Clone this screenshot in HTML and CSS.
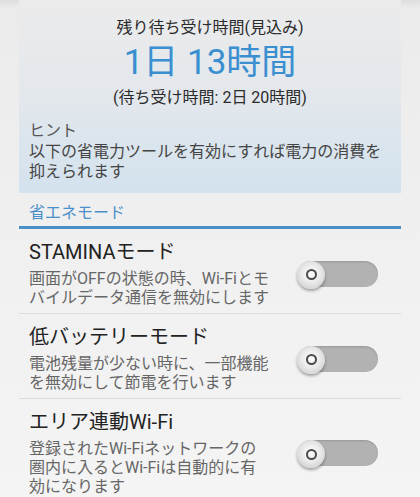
FILE: index.html
```html
<!DOCTYPE html>
<html lang="ja">
  <head>
    <meta charset="UTF-8" />
    <meta name="viewport" content="width=device-width, initial-scale=1.0" />
    <title>STAMINAモード</title>
    <link rel="stylesheet" href="styles.css">
  </head>
  <body>
    <div class="summary">
      <div class="summary-label">残り待ち受け時間(見込み)</div>
      <div class="summary-time">1日 13時間</div>
      <div class="summary-sub">(待ち受け時間: 2日 20時間)</div>
      <div class="hint-title">ヒント</div>
      <div class="hint-text">以下の省電力ツールを有効にすれば電力の消費を<br />抑えられます</div>
    </div>
    <div class="section-title">省エネモード</div>
    <div class="setting">
      <div class="setting-text">
        <div class="setting-name">STAMINAモード</div>
        <div class="setting-desc">画面がOFFの状態の時、Wi-Fiとモ<br />バイルデータ通信を無効にします</div>
      </div>
      <div class="switch"><span class="knob"><span class="ring"></span></span></div>
    </div>
    <div class="setting">
      <div class="setting-text">
        <div class="setting-name">低バッテリーモード</div>
        <div class="setting-desc">電池残量が少ない時に、一部機能<br />を無効にして節電を行います</div>
      </div>
      <div class="switch"><span class="knob"><span class="ring"></span></span></div>
    </div>
    <div class="setting">
      <div class="setting-text">
        <div class="setting-name">エリア連動Wi-Fi</div>
        <div class="setting-desc">登録されたWi-Fiネットワークの<br />圏内に入るとWi-Fiは自動的に有<br />効になります</div>
      </div>
      <div class="switch"><span class="knob"><span class="ring"></span></span></div>
    </div>
  </body>
</html>
```

FILE: styles.css
```css
body {
  margin: 0;
  font-family: Roboto, "Noto Sans CJK JP", sans-serif;
  background: linear-gradient(#dedede 0, #ebebeb 8px, #f1f1f1 300px, #f4f4f4);
  min-height: 497px;
}
.summary {
  margin: 0 19px;
  padding: 17px 10px 11px;
  background: linear-gradient(#ebebeb, #e4e8ec 45%, #d3e2ee);
}
.summary-label {
  text-align: center;
  font-size: 16px;
  line-height: 22px;
  color: #2b2b2b;
}
.summary-time {
  text-align: center;
  font-size: 35px;
  line-height: 44px;
  margin-top: 2px;
  color: #3a8fd1;
}
.summary-sub {
  text-align: center;
  margin-top: 3px;
  font-size: 16px;
  line-height: 20px;
  color: #2b2b2b;
}
.hint-title {
  margin-top: 12px;
  font-size: 16px;
  line-height: 21px;
  color: #555;
}
.hint-text {
  margin-top: 1px;
  font-size: 16px;
  line-height: 20px;
  color: #444;
}
.section-title {
  margin: 0 19px;
  padding: 10px 10px 3px;
  font-size: 16px;
  line-height: 20px;
  color: #4a8fc9;
  border-bottom: 3px solid #4a90c8;
}
.setting {
  display: flex;
  align-items: center;
  margin: 0 19px;
  padding: 11px 23px 6px 10px;
  border-bottom: 1px solid #dddddd;
}
.setting:last-child {
  border-bottom: none;
}
.setting-text {
  flex: 1;
}
.setting-name {
  font-size: 20px;
  line-height: 24px;
  color: #222;
}
.setting-desc {
  margin-top: 5px;
  font-size: 16px;
  line-height: 19px;
  color: #666;
  white-space: nowrap;
}
.switch {
  display: flex;
  align-items: center;
  width: 80px;
  height: 26px;
  border-radius: 13px;
  background: #b2b2b2;
  box-shadow: inset 0 1px 2px rgba(0, 0, 0, 0.15);
}
.knob {
  display: flex;
  align-items: center;
  justify-content: center;
  width: 28px;
  height: 28px;
  margin-left: -1px;
  margin-top: 2px;
  border-radius: 50%;
  background: radial-gradient(circle at 50% 45%, #fdfdfd 0, #ececec 40%, #c4c4c4 100%);
  box-shadow: 0 2px 3px rgba(0, 0, 0, 0.35);
}
.ring {
  width: 7px;
  height: 7px;
  border: 2px solid #4a4a4a;
  border-radius: 50%;
}
```
